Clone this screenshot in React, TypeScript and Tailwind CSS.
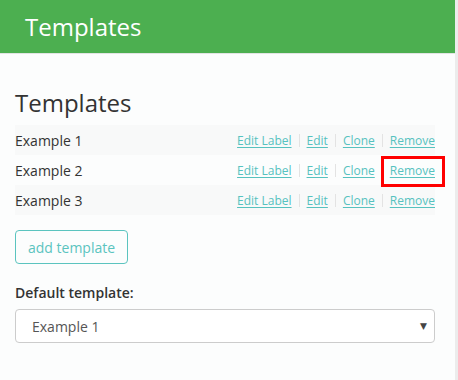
import React from "react";

const rows = ["Example 1", "Example 2", "Example 3"];

function Sep() {
  return <span className="mx-[7px] inline-block h-[13px] w-px bg-[#e3e3e3]" />;
}

function Link({ children, boxed }: { children: React.ReactNode; boxed?: boolean }) {
  return (
    <a href="#" className="relative text-[12px] leading-[17px] text-[#56c2bf] underline underline-offset-2">
      {children}
      {boxed && (
        <span className="pointer-events-none absolute left-[-9px] right-[-10px] top-[-6px] bottom-[-8px] border-[3px] border-[#ff0000]" />
      )}
    </a>
  );
}

export default function App() {
  return (
    <div className="flex h-[380px] w-[458px] overflow-hidden bg-[#fcfdfd]" style={{ fontFamily: '"Open Sans", "DejaVu Sans", sans-serif' }}>
      <div className="flex w-[455px] flex-col">
        <header className="flex h-[54px] items-center border-b border-[#e2e4e4] bg-[#4caf50] px-[25px]">
          <h1 className="text-[24px] leading-none text-white">Templates</h1>
        </header>
        <main className="px-[15px] pr-[20px]">
          <h2 className="mt-[33px] mb-[6px] text-[24px] leading-[32px] text-[#333]">Templates</h2>
          <div className="flex flex-col">
            {rows.map((r, i) => (
              <div key={r} className={`flex h-[30px] items-center justify-between ${i % 2 === 0 ? "bg-[#f8f9f9]" : ""}`}>
                <span className="text-[14px] text-[#333]">{r}</span>
                <div className="flex items-center">
                  <Link>Edit Label</Link>
                  <Sep />
                  <Link>Edit</Link>
                  <Sep />
                  <Link>Clone</Link>
                  <Sep />
                  <Link boxed={i === 1}>Remove</Link>
                </div>
              </div>
            ))}
          </div>
          <button className="mt-[15px] h-[34px] rounded-[4px] border border-[#5bc4bf] px-[12px] text-[14px] text-[#5bc4bf]">
            add template
          </button>
          <div className="mt-[18px] text-[14px] font-semibold text-[#333]">Default template:</div>
          <div className="mt-[6px] flex h-[34px] items-center justify-between rounded-[4px] border border-[#ccc] bg-white pl-[16px] pr-[7px]">
            <span className="text-[14px] text-[#555]">Example 1</span>
            <span className="text-[9px] text-[#444]">▼</span>
          </div>
        </main>
      </div>
      <div className="w-[3px] bg-[#ececec]" />
    </div>
  );
}
